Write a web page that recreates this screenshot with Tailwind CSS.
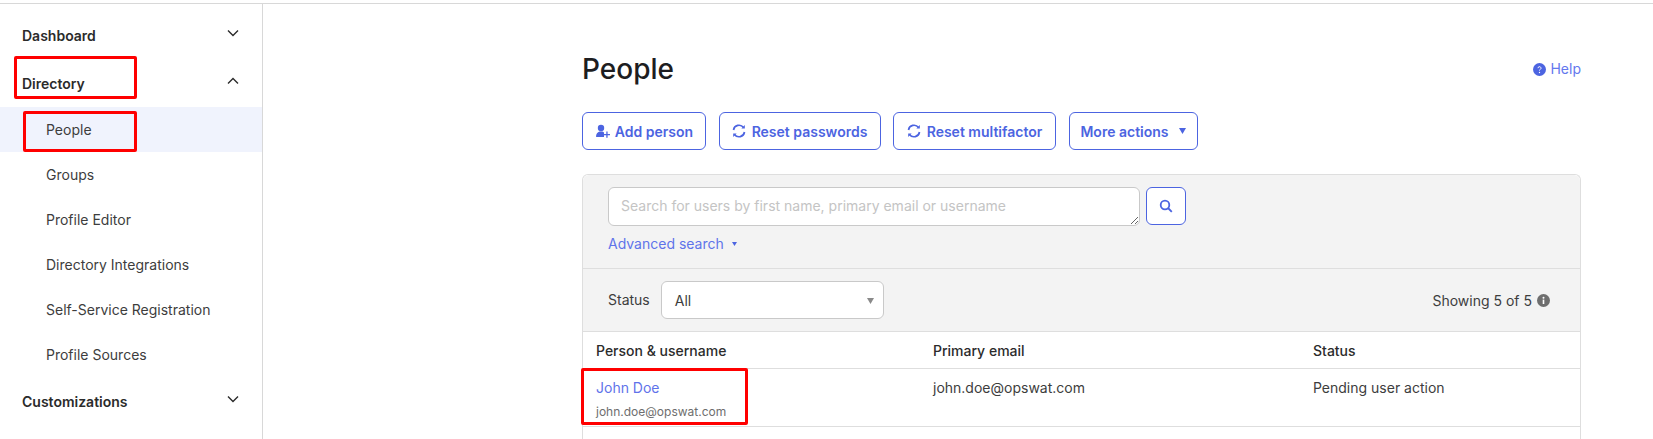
<!DOCTYPE html>
<html lang="en">
<head>
  <meta charset="UTF-8">
  <title>People</title>
  <script src="https://cdn.jsdelivr.net/npm/@tailwindcss/browser@4"></script>
</head>
<body>
  <div class="relative h-[439px] w-full overflow-hidden bg-white font-['Inter',sans-serif] text-[14px] text-[#3d3d3d]">
    <div class="h-1 border-b border-[#d8d8d8]"></div>

    <div class="flex h-[435px]">
      <!-- sidebar -->
      <nav class="w-[263px] shrink-0 border-r border-[#d8d8d8] pt-[7px]">
        <div class="flex h-12 items-center justify-between pl-[22px] pr-[22px] font-semibold text-[#2b2b2b]">
          <span>Dashboard</span>
          <svg class="mb-1 h-3 w-3.5" viewBox="0 0 14 12" fill="none" stroke="#2b2b2b" stroke-width="1.4"><path d="M2 3.5l5 5 5-5"/></svg>
        </div>
        <div class="flex h-12 items-center justify-between pl-[22px] pr-[22px] font-semibold text-[#2b2b2b]">
          <span>Directory</span>
          <svg class="mb-1 h-3 w-3.5" viewBox="0 0 14 12" fill="none" stroke="#2b2b2b" stroke-width="1.4"><path d="M2 8.5l5-5 5 5"/></svg>
        </div>
        <div class="flex h-[45px] items-center bg-[#f0f3fd] pl-[46px]">People</div>
        <div class="flex h-[45px] items-center pl-[46px]">Groups</div>
        <div class="flex h-[45px] items-center pl-[46px]">Profile Editor</div>
        <div class="flex h-[45px] items-center pl-[46px]">Directory Integrations</div>
        <div class="flex h-[45px] items-center pl-[46px]">Self-Service Registration</div>
        <div class="flex h-[45px] items-center pl-[46px]">Profile Sources</div>
        <div class="flex h-12 items-center justify-between pl-[22px] pr-[22px] font-semibold text-[#2b2b2b]">
          <span>Customizations</span>
          <svg class="mb-1 h-3 w-3.5" viewBox="0 0 14 12" fill="none" stroke="#2b2b2b" stroke-width="1.4"><path d="M2 3.5l5 5 5-5"/></svg>
        </div>
      </nav>

      <!-- main -->
      <main class="ml-[319px] w-[999px] shrink-0">
        <div class="flex h-[108px] items-start justify-between pt-[47px]">
          <h1 class="text-[28px] leading-9 font-medium text-[#1d1d21]">People</h1>
          <a class="mt-[8px] flex items-center gap-[4px] text-[14px] leading-5 text-[#6478ee]">
            <svg class="h-[13px] w-[13px]" viewBox="0 0 13 13"><circle cx="6.5" cy="6.5" r="6.5" fill="#4c64e1"/><path d="M5 5.2a1.5 1.5 0 1 1 2.2 1.3c-.5.3-.7.5-.7 1" fill="none" stroke="#fff" stroke-width="1"/><circle cx="6.5" cy="9.5" r=".7" fill="#fff"/></svg>
            Help
          </a>
        </div>

        <div class="flex gap-[12.5px] font-semibold text-[#4c64e1]">
          <button class="flex h-[38px] w-[124px] items-center justify-center gap-[5px] rounded-md border border-[#4c64e1] bg-white">
            <svg class="h-[15px] w-[15px]" viewBox="0 0 15 15" fill="#4c64e1"><circle cx="6" cy="4" r="3.2"/><path d="M1 12.5c0-2.5 1.500-4.500 3.500-5h3c.6.2 1.100.5 1.500 1v4.500H2a1 1 0 0 1-1-.5z"/><path d="M11.300 7.500h1.300v2.500h2.400v1.300h-2.400v2.500h-1.300v-2.500H9v-1.300h2.300z"/></svg>
            Add person
          </button>
          <button class="flex h-[38px] w-[162px] items-center justify-center gap-[6px] rounded-md border border-[#4c64e1] bg-white">
            <svg class="h-[14px] w-[14px]" viewBox="0 0 14 14" fill="none" stroke="#4c64e1" stroke-width="1.700"><path d="M1.500 6a5.600 5.600 0 0 1 10-2.500"/><path d="M12.500 8a5.600 5.600 0 0 1-10 2.500"/><path d="M12.800 1v3.400H9.400" fill="#4c64e1" stroke-width="0"/><path d="M1.200 13V9.600h3.400" fill="#4c64e1" stroke-width="0"/></svg>
            Reset passwords
          </button>
          <button class="flex h-[38px] w-[163px] items-center justify-center gap-[6px] rounded-md border border-[#4c64e1] bg-white">
            <svg class="h-[14px] w-[14px]" viewBox="0 0 14 14" fill="none" stroke="#4c64e1" stroke-width="1.700"><path d="M1.500 6a5.600 5.600 0 0 1 10-2.500"/><path d="M12.500 8a5.600 5.600 0 0 1-10 2.500"/><path d="M12.800 1v3.400H9.400" fill="#4c64e1" stroke-width="0"/><path d="M1.200 13V9.600h3.400" fill="#4c64e1" stroke-width="0"/></svg>
            Reset multifactor
          </button>
          <button class="flex h-[38px] w-[129px] items-center justify-center gap-[10px] rounded-md border border-[#4c64e1] bg-white">
            More actions
            <svg class="h-[6px] w-[7px]" viewBox="0 0 7 6" fill="#4c64e1"><path d="M0 0h7L3.500 6z"/></svg>
          </button>
        </div>

        <!-- table panel -->
        <div class="mt-[24px] rounded-t-md border-x border-t border-[#dedede]">
          <div class="h-[94px] rounded-t-md border-b border-[#dedede] bg-[#f3f3f3] pl-[25px] pt-3">
            <div class="flex gap-[6px]">
              <textarea class="block h-[39px] w-[532px] rounded-md border border-[#c9c9c9] bg-white px-3 py-[8px] text-[14px] leading-5 outline-none placeholder:text-[#c4c4c4]" placeholder="Search for users by first name, primary email or username"></textarea>
              <button class="flex h-[38px] w-[40px] items-center justify-center rounded-md border border-[#4c64e1] bg-white">
                <svg class="h-[14px] w-[14px]" viewBox="0 0 14 14" fill="none" stroke="#4c64e1" stroke-width="1.800"><circle cx="6" cy="6" r="4.300"/><path d="M9 9l3.800 3.800"/></svg>
              </button>
            </div>
            <a class="mt-[8px] flex items-center gap-[8px] leading-5 text-[#5f73ea]">
              Advanced search
              <svg class="h-[4px] w-[5px]" viewBox="0 0 5 4" fill="#4c64e1"><path d="M0 0h5L2.500 4z"/></svg>
            </a>
          </div>

          <div class="flex h-[63px] items-center justify-between border-b border-[#dedede] bg-[#f3f3f3] pl-[25px] pr-[30px]">
            <div class="flex items-center gap-[11px]">
              <span class="mb-[2px]">Status</span>
              <div class="relative flex h-[38px] w-[223px] items-center rounded-md border border-[#c9c9c9] bg-white pl-[13px]">
                All
                <svg class="absolute right-[9px] top-[16px] h-[6px] w-[7px]" viewBox="0 0 7 6" fill="#8a8a8a"><path d="M0 0h7L3.500 6z"/></svg>
              </div>
            </div>
            <div class="flex items-center gap-[5px]">
              Showing 5 of 5
              <svg class="h-[13px] w-[13px]" viewBox="0 0 13 13"><circle cx="6.500" cy="6.500" r="6.500" fill="#6e6e6e"/><rect x="5.700" y="5.600" width="1.600" height="4.400" fill="#fff"/><circle cx="6.500" cy="3.800" r="1" fill="#fff"/></svg>
            </div>
          </div>

          <div class="grid h-[37px] grid-cols-[337px_380px_1fr] items-center border-b border-[#dedede] pl-[13px] font-medium text-[#2b2b2b]">
            <div>Person &amp; username</div>
            <div>Primary email</div>
            <div>Status</div>
          </div>

          <div class="grid h-[58px] grid-cols-[337px_380px_1fr] border-b border-[#dedede] pl-[13px] pt-[9px]">
            <div>
              <div class="leading-5 text-[#5f73ea]">John Doe</div>
              <div class="mt-[6px] text-[12px] leading-4 text-[#6e6e6e]">john.doe@opswat.com</div>
            </div>
            <div class="leading-5">john.doe@opswat.com</div>
            <div class="leading-5">Pending user action</div>
          </div>
          <div class="h-10"></div>
        </div>
      </main>
    </div>

    <!-- annotations drawn on top of the screenshot -->
    <div class="absolute left-[14px] top-[56px] h-[43px] w-[123px] rounded-[2px] border-[3px] border-[#ff0000]"></div>
    <div class="absolute left-[23px] top-[111px] h-[41px] w-[114px] rounded-[2px] border-[3px] border-[#ff0000]"></div>
    <div class="absolute left-[581px] top-[368px] h-[57px] w-[167px] rounded-[2px] border-[3px] border-[#ff0000]"></div>
  </div>
</body>
</html>
